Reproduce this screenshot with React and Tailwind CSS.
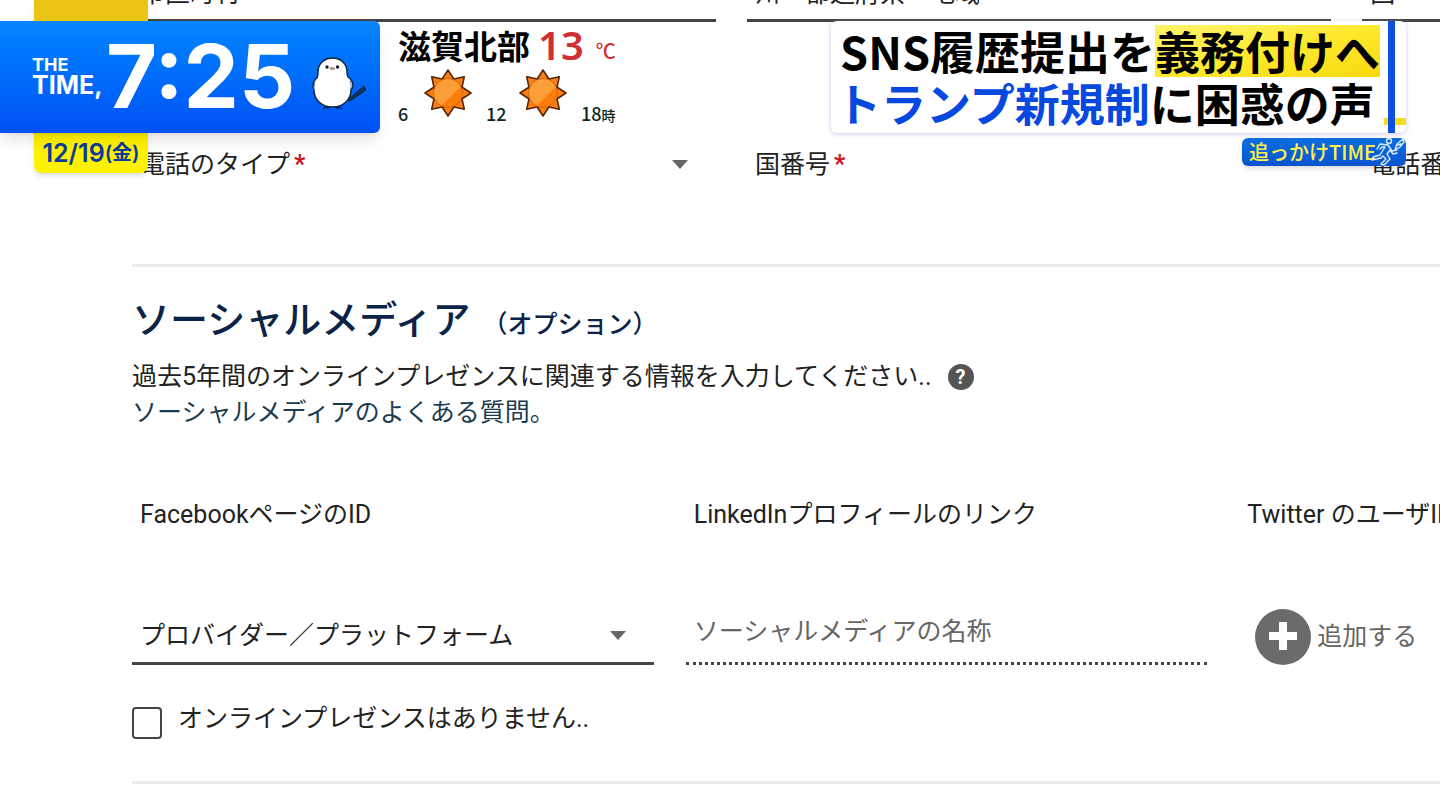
import React, { useState } from "react";

function Sun({ id }) {
  const rays = [0, 45, 90, 135, 180, 225, 270, 315];
  return (
    <svg viewBox="0 0 48 48" className="mb-1.5 h-12 w-12" aria-hidden="true">
      <defs>
        <linearGradient id={id} x1="0" y1="0" x2="1" y2="1">
          <stop offset="0.6" stopColor="#fd9f37" />
          <stop offset="0.62" stopColor="#fb7d0b" />
        </linearGradient>
      </defs>
      {rays.map((deg) => (
        <path
          key={deg}
          d="M17.5 11 L24 1 L30.5 11 Z"
          transform={`rotate(${deg} 24 24)`}
          fill="#f97f14"
          stroke="#5a2504"
          strokeWidth="1.6"
          strokeLinejoin="round"
        />
      ))}
      <circle cx="24" cy="24" r="14.5" fill={`url(#${id})`} stroke="#c9600f" strokeWidth="0.8" />
    </svg>
  );
}

function Bird() {
  return (
    <svg viewBox="0 0 54 53" className="mt-3 h-[53px] w-[54px]" aria-hidden="true">
      <path d="M36 43 L52 29 L54 33 L38 44 Z" fill="#123458" stroke="#0b2340" />
      <path d="M11 52 L15 49 M16 52 L15 49 M26 49 L30 52 M26 49 L25 52" stroke="#0b2340" strokeWidth="1.5" />
      <path
        d="M20.5 1 C12 1 6 7 6 15 C6 17 6 19 5 21 C2 23 1 27 1 30 C1 32 2 32 2 33 C2 43 10 50 20.5 50 C31 50 39 43 39 33 C39 32 41 31 41 29 C41 26 39 22 36 20 C35 18 35 17 35 15 C35 7 29 1 20.5 1 Z"
        fill="#fff"
        stroke="#0b2340"
        strokeWidth="1.4"
      />
      <path d="M3 24 C2 28 2 31 2 33 M38 24 C40 28 39 32 38 34" stroke="#54708f" fill="none" />
      <circle cx="15" cy="10" r="1.7" fill="#15202c" />
      <circle cx="25.5" cy="10" r="1.7" fill="#15202c" />
      <path d="M17 11 Q20.3 9 23.5 11 Q20.3 15.5 17 11 Z" fill="#b09b80" />
    </svg>
  );
}

function Runner() {
  return (
    <svg
      viewBox="0 0 36 30"
      className="absolute right-0 bottom-0 h-[30px] w-9"
      fill="none"
      stroke="#d9ecff"
      strokeWidth="1.4"
      strokeLinecap="round"
      strokeLinejoin="round"
      aria-hidden="true"
    >
      <circle cx="19" cy="5" r="2.5" />
      <path d="M7 13 L10 8 L18 9 L22 15 L27 14 M10 13 L12 11 L15 11 L10 19 L3 21 L2 24 L11 22 L13 20 L16 23 L11 28 L14 29 L20 23 L17 18 L20 14 L23 18 L27 17" />
      <path d="M25 14 L27 8 L33 3 L34 6 L30 11 Z M28 9 L31 8" />
    </svg>
  );
}

function Caret() {
  return (
    <svg viewBox="0 0 16 10" className="h-[10px] w-4 shrink-0" aria-hidden="true">
      <path d="M0 0 H16 L8 9 Z" fill="#666" />
    </svg>
  );
}

function TopField({ id, label }) {
  return (
    <div className="flex h-[44px] border-b-3 border-[#444] pb-[9px] pl-2">
      <label htmlFor={id} className="leading-8 whitespace-nowrap">
        {label}
      </label>
      <input id={id} className="min-w-0 flex-1 outline-none" />
    </div>
  );
}

function PhoneField({ id, label, caret }) {
  return (
    <div className="flex h-8 items-center pr-7 pl-2">
      <label htmlFor={id} className="leading-8 whitespace-nowrap">
        {label}
        <span className="ml-1 font-bold text-[#c8141c]">*</span>
      </label>
      <select id={id} className="h-8 min-w-0 flex-1 appearance-none outline-none" />
      {caret && <Caret />}
    </div>
  );
}

function ProfileField({ id, label }) {
  return (
    <div className="flex flex-col pl-2">
      <label htmlFor={id} className="leading-8 whitespace-nowrap">
        {label}
      </label>
      <input id={id} className="h-8 min-w-0 outline-none" />
    </div>
  );
}

function Clock() {
  return (
    <div className="relative">
      <div className="absolute top-0 left-[34px] flex h-[173px] w-[114px] items-end justify-center rounded-b-lg bg-linear-to-b from-[#e9c414] from-10% to-[#fff200] to-80% pb-1 font-['Inter','Noto_Sans_CJK_JP',sans-serif] text-[25px] leading-8 font-semibold text-[#0b3a9c] shadow-md">
        <span>12/19</span>
        <span className="text-xl leading-8">(金)</span>
      </div>
      <div className="relative mt-[21px] flex h-28 w-[380px] items-center rounded-r-md bg-linear-to-b from-[#0a85ff] to-[#0050f5] pl-8 font-['Inter',sans-serif] font-bold text-white shadow-lg">
        <div className="w-[74px] pb-1">
          <div className="text-lg leading-5">THE</div>
          <div className="text-[25px] leading-5">TIME,</div>
        </div>
        <div className="w-[206px] pb-0.5 text-[88px] leading-none">7:25</div>
        <Bird />
      </div>
    </div>
  );
}

function Weather() {
  return (
    <div className="mt-[21px] ml-[18px]">
      <div className="flex h-12 items-center leading-[50px] font-bold text-black">
        <span className="text-[33px]">滋賀北部</span>
        <span className="ml-2 font-['Noto_Sans',sans-serif] text-[40px] font-semibold text-[#cf3035]">13</span>
        <span className="ml-3 pt-3 text-xl leading-10 font-medium text-[#cf3035]">℃</span>
      </div>
      <div className="flex items-end text-lg leading-5 font-medium text-[#0c2a1c]">
        <span className="w-[26px]">6</span>
        <Sun id="sun-morning" />
        <span className="w-[47px] pl-[14px]">12</span>
        <Sun id="sun-noon" />
        <span className="pl-[14px]">
          18<span className="text-sm leading-none">時</span>
        </span>
      </div>
    </div>
  );
}

function Headline() {
  return (
    <div className="mt-[21px] mr-[34px] ml-auto flex flex-col items-end">
      <div className="flex h-28 rounded-md bg-white pl-[5px] shadow-[0_1px_5px_rgba(150,150,210,0.5)]">
        <h1 className="py-1 text-[45px] leading-[52px] font-bold whitespace-nowrap text-black">
          <div className="flex justify-between">
            <span className="pl-1">SNS履歴提出を</span>
            <span className="bg-linear-to-br from-[#fff36a] via-[#ffe92c] to-[#f7d90c]">義務付けへ</span>
          </div>
          <div>
            <span className="text-[#0648e0]">トランプ新規制</span>に困惑の声
          </div>
        </h1>
        <div className="relative ml-1 w-[22px]">
          <div className="absolute bottom-2 h-[7px] w-full bg-[#f7dc1e]" />
          <div className="absolute left-1 h-full w-[7px] bg-[#0b50e0]" />
        </div>
      </div>
      <div className="relative mt-[5px] w-[164px] rounded-md bg-linear-to-b from-[#0b6ee0] to-[#0a55cf] pl-[7px] text-xl leading-7 font-medium whitespace-nowrap text-[#fff04a] shadow-md">
        追っかけTIME
        <Runner />
      </div>
    </div>
  );
}

export default function App() {
  const [noPresence, setNoPresence] = useState(false);

  return (
    <div className="relative min-h-screen overflow-hidden bg-white font-['Noto_Sans_CJK_JP',sans-serif] text-[25px] text-[#222]">
      <form className="-mt-[22px] ml-[132px] font-['Roboto','Noto_Sans_CJK_JP',sans-serif]">
        <div className="grid grid-cols-[minmax(0,15fr)_minmax(0,15fr)_minmax(0,2fr)] gap-x-[31px]">
          <TopField id="city" label="市区町村" />
          <TopField id="state" label="州・都道府県・地域" />
          <TopField id="country" label="国" />
        </div>
        <div className="mt-[127px] grid grid-cols-[minmax(0,15fr)_minmax(0,15fr)_minmax(0,2fr)] gap-x-[31px]">
          <PhoneField id="phone-type" label="電話のタイプ" caret />
          <PhoneField id="country-code" label="国番号" />
          <PhoneField id="phone" label="電話番号" />
        </div>

        <section className="mt-[83px] border-y-3 border-[#ececec] pb-[42px]">
          <h2 className="mt-[29px] flex items-baseline text-[38px] leading-[48px] font-medium text-[#0b2347]">
            ソーシャルメディア
            <span className="ml-3 text-[25px] leading-8">（オプション）</span>
          </h2>
          <div className="mt-[15px] leading-9">
            <p className="flex items-center gap-4">
              過去5年間のオンラインプレゼンスに関連する情報を入力してください..
              <button
                type="button"
                aria-label="ヘルプ"
                className="flex h-[26px] w-[26px] items-center justify-center rounded-full bg-[#555] text-xl font-bold text-white"
              >
                ?
              </button>
            </p>
            <a href="#faq" className="block text-[#1b3c50]">
              ソーシャルメディアのよくある質問。
            </a>
          </div>

          <div className="mt-[68px] grid grid-cols-[minmax(0,13fr)_minmax(0,13fr)_minmax(0,5fr)] gap-x-8">
            <ProfileField id="facebook" label="FacebookページのID" />
            <ProfileField id="linkedin" label="LinkedInプロフィールのリンク" />
            <ProfileField id="twitter" label="Twitter のユーザID" />
          </div>

          <div className="mt-[46px] grid grid-cols-[minmax(0,13fr)_minmax(0,13fr)_minmax(0,5fr)] items-end gap-x-8">
            <div className="flex h-14 items-center border-b-3 border-[#444] pr-7 pl-2">
              <select aria-label="プロバイダー／プラットフォーム" className="min-w-0 flex-1 appearance-none outline-none">
                <option>プロバイダー／プラットフォーム</option>
              </select>
              <Caret />
            </div>
            <input
              aria-label="ソーシャルメディアの名称"
              placeholder="ソーシャルメディアの名称"
              className="h-14 min-w-0 border-b-3 border-dotted border-[#444] pb-2 pl-2 outline-none placeholder:text-[#666]"
            />
            <button type="button" className="ml-4 flex items-center gap-1.5 whitespace-nowrap text-[#666]">
              <svg viewBox="0 0 56 56" className="h-14 w-14 shrink-0" aria-hidden="true">
                <circle cx="28" cy="28" r="28" fill="#6b6b6b" />
                <path d="M28 13 V41 M14 27 H42" stroke="#fff" strokeWidth="8" />
              </svg>
              追加する
            </button>
          </div>

          <div className="mt-[38px] flex items-start gap-4">
            <input
              id="no-presence"
              type="checkbox"
              checked={noPresence}
              onChange={(e) => setNoPresence(e.target.checked)}
              className="mt-1 h-8 w-[30px] appearance-none rounded-sm border-2 border-[#444] checked:bg-[#444]"
            />
            <label htmlFor="no-presence" className="leading-8">
              オンラインプレゼンスはありません..
            </label>
          </div>
        </section>
      </form>

      <header className="absolute inset-x-0 top-0 flex items-start">
        <Clock />
        <Weather />
        <Headline />
      </header>
    </div>
  );
}
